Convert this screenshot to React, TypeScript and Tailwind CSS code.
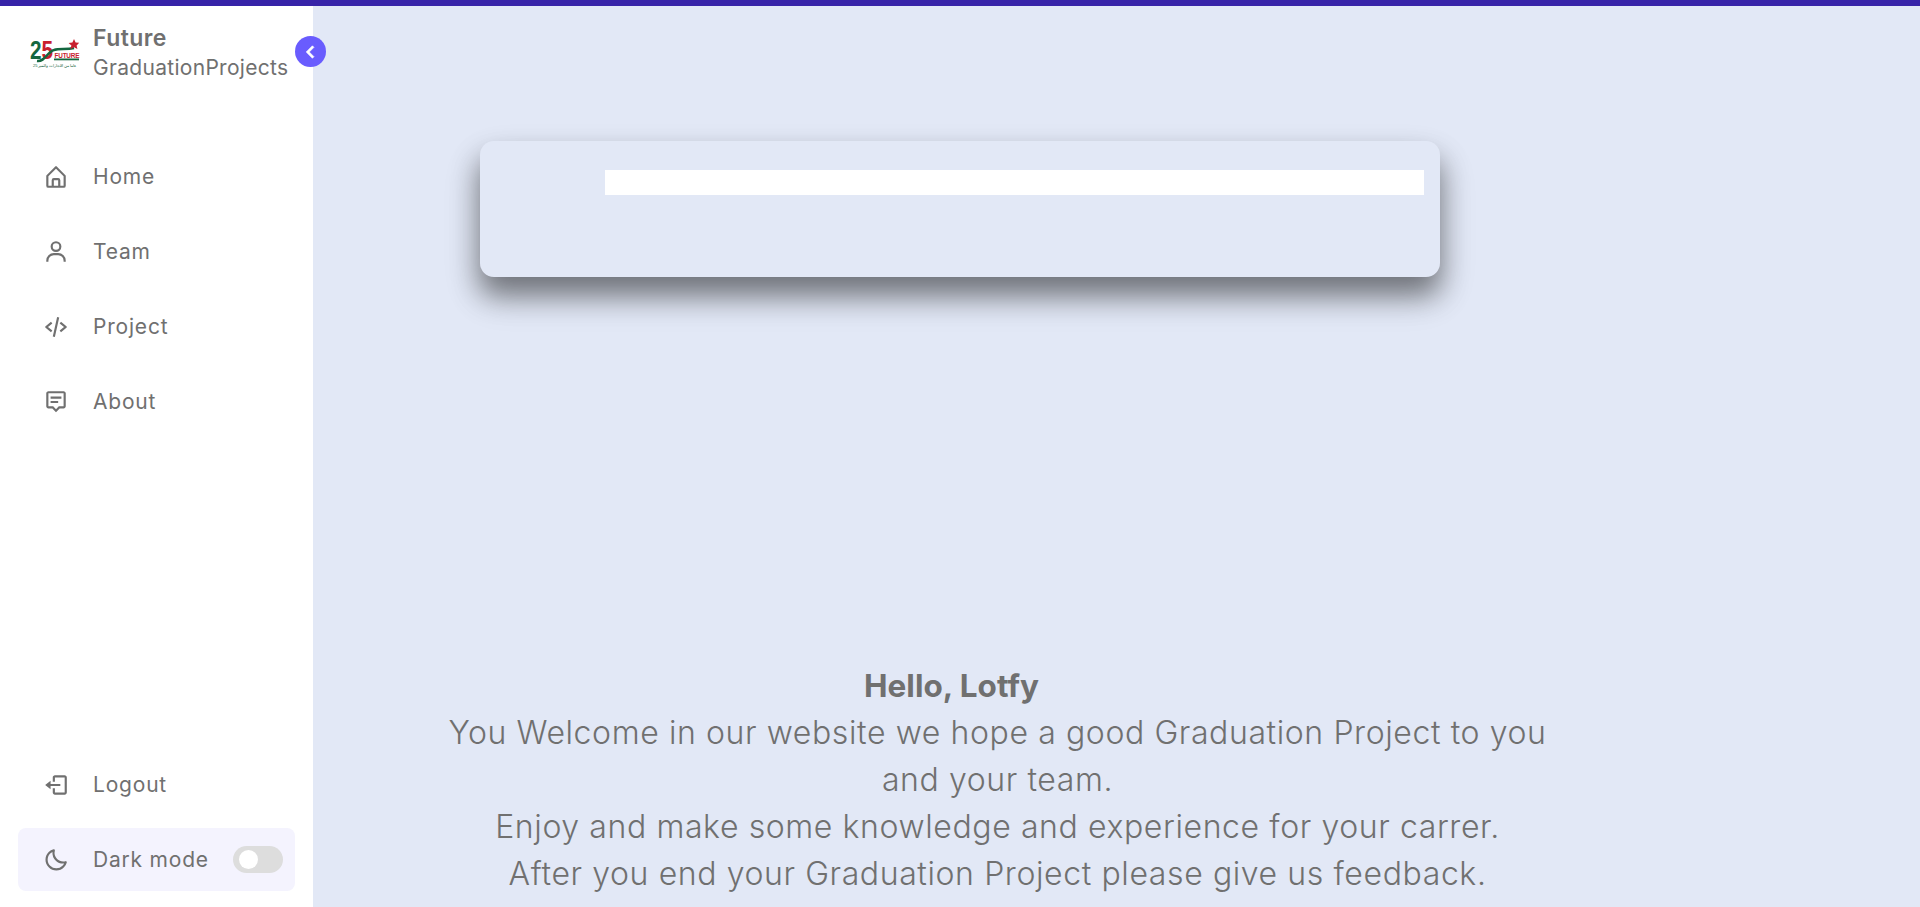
import { BiHomeAlt, BiUser, BiCodeAlt, BiMessageAltDetail, BiLogOut, BiMoon, BiChevronLeft } from "react-icons/bi";
import type { ReactNode } from "react";

function Logo() {
  return (
    <svg viewBox="0 0 50 32" className="w-[50px] h-[32px] shrink-0 overflow-visible">
      <text x="0" y="22" fontSize="26" fontWeight="700" fontFamily="Liberation Sans" textLength="23" lengthAdjust="spacingAndGlyphs">
        <tspan fill="#14663f">2</tspan>
        <tspan fill="#c8202f">5</tspan>
      </text>
      <path d="M7 24 C15 25 17 15 24 13 C30 11 36 13 44 11" stroke="#14663f" strokeWidth="2.4" fill="none" />
      <path d="M44 2l1.6 3.4 3.6.4-2.6 2.6.8 3.6-3.4-1.8-3.6 2 1-3.8-2.8-2.4 3.8-.4z" fill="#c8202f" />
      <text x="24.5" y="20.5" fontSize="6.4" fontWeight="700" fill="#c8202f" fontFamily="Liberation Sans" textLength="25">FUTURE</text>
      <rect x="24" y="21.5" width="25" height="1.8" fill="#14663f" />
      <text x="3" y="30" fontSize="4" fill="#14663f" fontFamily="Liberation Sans" textLength="43">25 عاما من الانجازات والتميز</text>
    </svg>
  );
}

function NavItem({ icon, label }: { icon: ReactNode; label: string }) {
  return (
    <a className="flex items-center h-[75px] pl-[43px] text-[#707070]">
      <span className="w-[50px] text-[26px] flex items-center">{icon}</span>
      <span className="text-[21px] tracking-[0.8px] font-normal">{label}</span>
    </a>
  );
}

export default function App() {
  return (
    <div className="h-screen overflow-hidden flex flex-col bg-[#e2e8f6] font-['Inter','Liberation_Sans',sans-serif] text-[#707070]">
      <div className="h-[6px] bg-[#3723a8] shrink-0" />
      <div className="flex flex-1 min-h-0">
        <aside className="relative w-[313px] shrink-0 bg-white flex flex-col pb-[16px]">
          <header className="flex items-center pl-[30px] pt-[17px] gap-[13px]">
            <Logo />
            <div className="flex flex-col">
              <span className="text-[23px] leading-[30px] tracking-[0.4px] font-semibold">Future</span>
              <span className="text-[21px] leading-[30px] tracking-[0.3px] whitespace-nowrap">GraduationProjects</span>
            </div>
          </header>
          <button className="absolute top-[30px] left-[295px] w-[31px] h-[31px] rounded-full bg-[#695cfe] text-white flex items-center justify-center text-[26px]">
            <BiChevronLeft className="stroke-white stroke-[0.6]" />
          </button>
          <nav className="mt-[56px] flex flex-col">
            <NavItem icon={<BiHomeAlt />} label="Home" />
            <NavItem icon={<BiUser />} label="Team" />
            <NavItem icon={<BiCodeAlt />} label="Project" />
            <NavItem icon={<BiMessageAltDetail />} label="About" />
          </nav>
          <div className="mt-auto flex flex-col">
            <NavItem icon={<BiLogOut />} label="Logout" />
            <div className="mx-[18px] mt-[6px] h-[63px] rounded-[8px] bg-[#f4f3fe] flex items-center pl-[25px] pr-[12px]">
              <span className="w-[50px] text-[26px] flex items-center"><BiMoon /></span>
              <span className="text-[21px] tracking-[0.8px] whitespace-nowrap">Dark mode</span>
              <span className="ml-auto w-[50px] h-[27px] rounded-full bg-[#dddddd] flex items-center pl-[6px]">
                <span className="w-[19px] h-[19px] rounded-full bg-white" />
              </span>
            </div>
          </div>
        </aside>
        <main className="flex-1 min-w-0 flex flex-col pl-[167px]">
          <section className="mt-[135px] w-[960px] h-[136px] rounded-[14px] bg-[#e2e8f6] shadow-[0_18px_28px_rgba(0,0,0,0.42),0_19px_38px_rgba(0,0,0,0.16)] pt-[29px] pl-[125px] pr-[16px]">
            <div className="h-[25px] bg-white" />
          </section>
          <div className="mt-[385px] -ml-[32px] w-[1099px] text-center text-[32px] leading-[47px] tracking-[0.6px] font-light whitespace-nowrap">
            <p className="font-bold tracking-normal text-[31.5px] pr-[92px]">Hello, Lotfy</p>
            <p>You Welcome in our website we hope a good Graduation Project to you</p>
            <p>and your team.</p>
            <p>Enjoy and make some knowledge and experience for your carrer.</p>
            <p>After you end your Graduation Project please give us feedback.</p>
          </div>
        </main>
      </div>
    </div>
  );
}
